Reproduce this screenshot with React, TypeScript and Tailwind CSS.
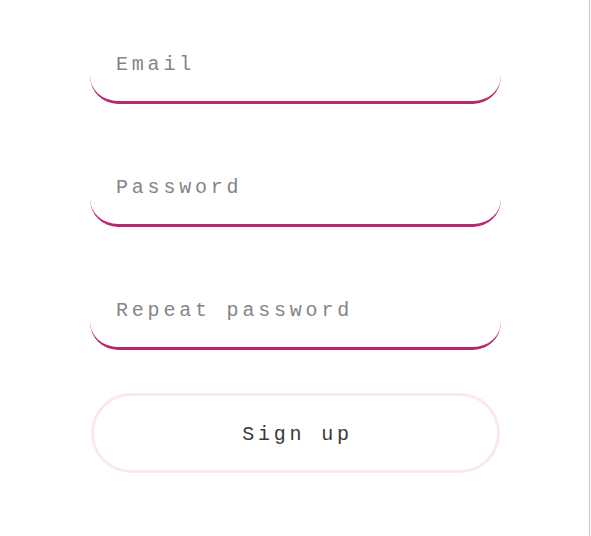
const fields = ["Email", "Password", "Repeat password"];

const App = () => {
  return (
    <div className="w-[590px] h-[536px] bg-white border-r border-[#c4c4c4] font-['Liberation_Mono',monospace]">
      <form className="w-[411px] ml-[90px] pt-[34px] flex flex-col gap-[53px]">
        {fields.map((f) => (
          <input
            key={f}
            type={f === "Email" ? "email" : "password"}
            placeholder={f}
            className="h-[70px] w-full bg-white rounded-[28px] border-b-[3px] border-[#b8276c] pl-[26px] pr-4 pt-[14px] pb-[20px] text-[20px] tracking-[3.8px] text-[#444] placeholder:text-[#858585] outline-none"
          />
        ))}
      </form>
      <div className="w-[411px] ml-[90px] mt-[43px] px-[1px]">
        <button className="w-full h-[80px] rounded-full border-[3px] border-[#f8eae7] bg-white pt-[3px] pl-[4px] text-[20px] tracking-[3.8px] text-[#3a3a3a] font-['Liberation_Mono',monospace]">
          Sign up
        </button>
      </div>
    </div>
  );
};

export default App;
